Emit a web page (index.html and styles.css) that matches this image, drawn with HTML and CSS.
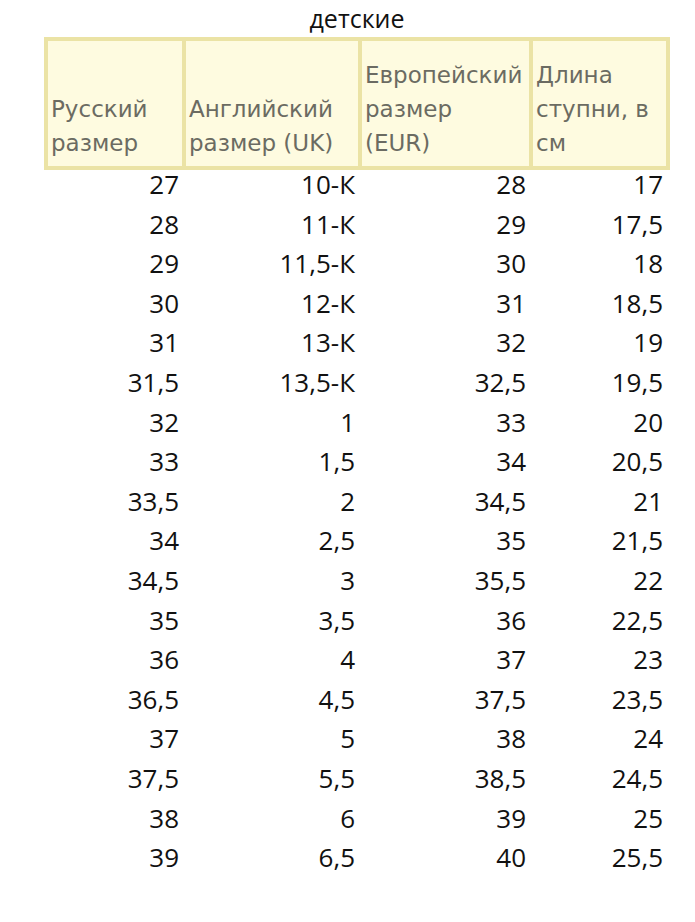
FILE: index.html
```html
<!DOCTYPE html>
<html lang="ru">
<head>
<meta charset="utf-8">
<link rel="stylesheet" href="styles.css">
</head>
<body>
<div class="page">
  <div class="title">детские</div>
  <table class="sizes">
    <colgroup>
      <col class="c1"><col class="c2"><col class="c3"><col class="c4">
    </colgroup>
    <thead>
      <tr>
        <th>Русский<br>размер</th>
        <th>Английский<br>размер (UK)</th>
        <th>Европейский<br>размер<br>(EUR)</th>
        <th>Длина<br>ступни, в<br>см</th>
      </tr>
    </thead>
    <tbody>
      <tr><td>27</td><td>10-К</td><td>28</td><td>17</td></tr>
      <tr><td>28</td><td>11-К</td><td>29</td><td>17,5</td></tr>
      <tr><td>29</td><td>11,5-К</td><td>30</td><td>18</td></tr>
      <tr><td>30</td><td>12-К</td><td>31</td><td>18,5</td></tr>
      <tr><td>31</td><td>13-К</td><td>32</td><td>19</td></tr>
      <tr><td>31,5</td><td>13,5-К</td><td>32,5</td><td>19,5</td></tr>
      <tr><td>32</td><td>1</td><td>33</td><td>20</td></tr>
      <tr><td>33</td><td>1,5</td><td>34</td><td>20,5</td></tr>
      <tr><td>33,5</td><td>2</td><td>34,5</td><td>21</td></tr>
      <tr><td>34</td><td>2,5</td><td>35</td><td>21,5</td></tr>
      <tr><td>34,5</td><td>3</td><td>35,5</td><td>22</td></tr>
      <tr><td>35</td><td>3,5</td><td>36</td><td>22,5</td></tr>
      <tr><td>36</td><td>4</td><td>37</td><td>23</td></tr>
      <tr><td>36,5</td><td>4,5</td><td>37,5</td><td>23,5</td></tr>
      <tr><td>37</td><td>5</td><td>38</td><td>24</td></tr>
      <tr><td>37,5</td><td>5,5</td><td>38,5</td><td>24,5</td></tr>
      <tr><td>38</td><td>6</td><td>39</td><td>25</td></tr>
      <tr><td>39</td><td>6,5</td><td>40</td><td>25,5</td></tr>
    </tbody>
  </table>
</div>
</body>
</html>
```
FILE: styles.css
```css
html, body {
  margin: 0;
  padding: 0;
  background: #ffffff;
}
.page {
  width: 695px;
  padding-left: 44px;
  box-sizing: border-box;
  font-family: "Open Sans", "Noto Sans", sans-serif;
  color: #111111;
}
.title {
  width: 626px;
  height: 37px;
  text-align: center;
  font-size: 25px;
  line-height: 37px;
}
.sizes {
  border-collapse: collapse;
  table-layout: fixed;
  width: 622px;
}
.c1 { width: 138px; }
.c2 { width: 176px; }
.c3 { width: 171px; }
.c4 { width: 137px; }
.sizes th {
  background: #fefbe0;
  border: 4px solid #ebe3a5;
  font-family: "DejaVu Sans", sans-serif;
  font-weight: normal;
  font-size: 23px;
  color: #6b6b62;
  text-align: left;
  vertical-align: bottom;
  line-height: 34px;
  padding: 0 2px 6px 3px;
  height: 129px;
  box-sizing: border-box;
  white-space: nowrap;
}
.sizes td {
  text-align: right;
  font-size: 26px;
  height: 39.6px;
  padding: 0 5px 10px 0;
  line-height: 29.6px;
  box-sizing: border-box;
}
```
